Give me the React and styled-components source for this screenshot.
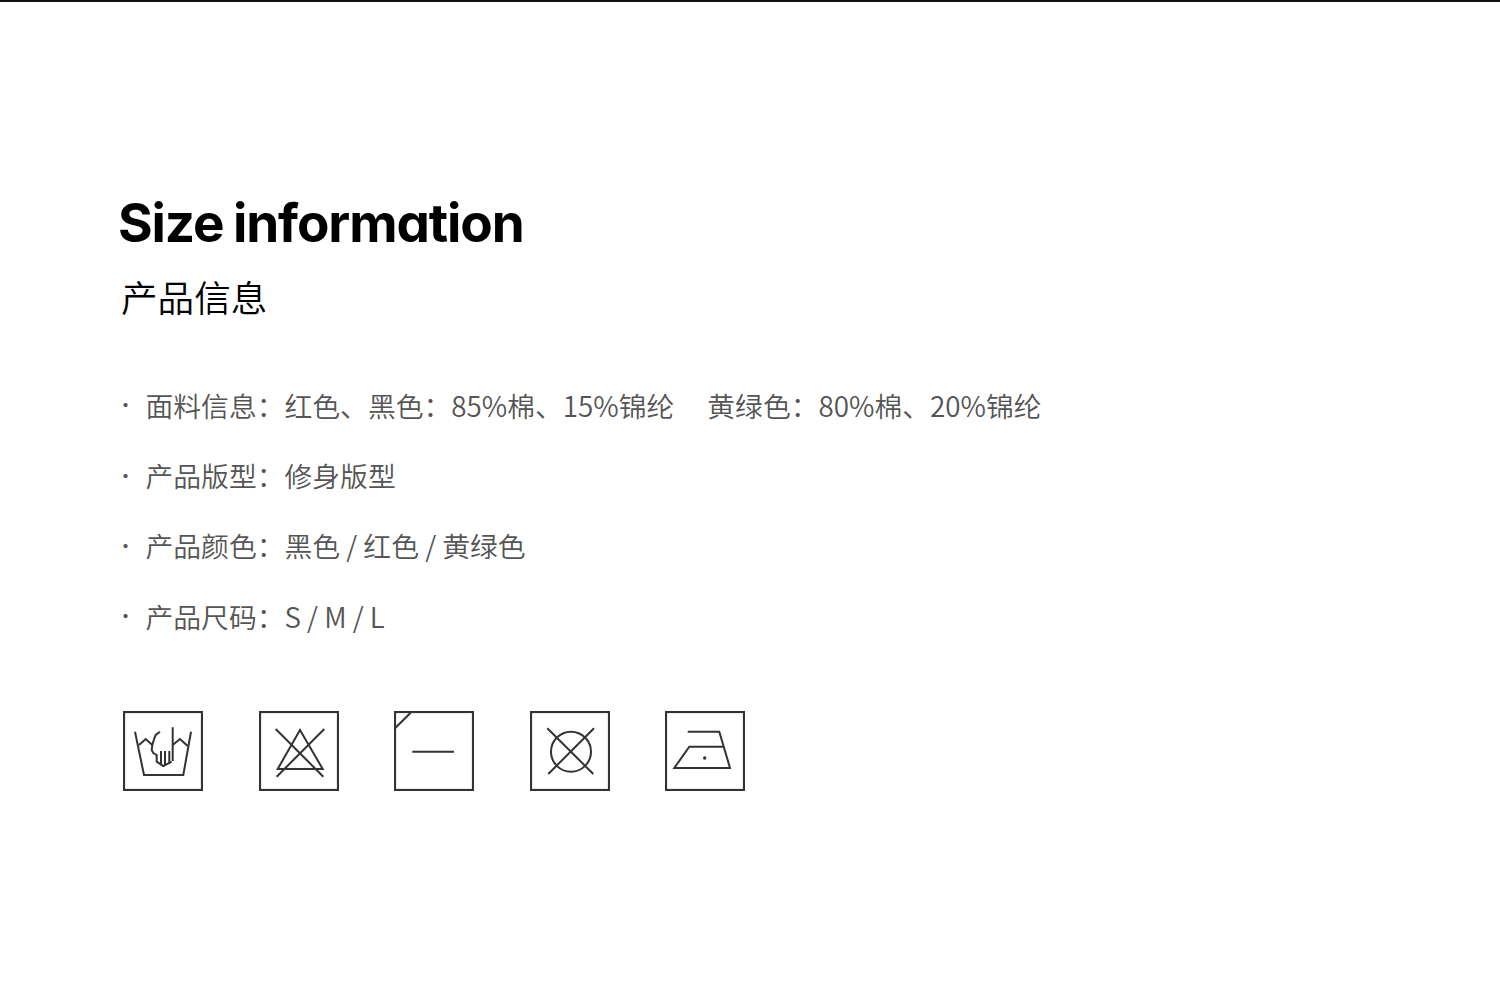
import React from 'react';
import styled, { createGlobalStyle } from 'styled-components';

const GlobalStyle = createGlobalStyle`
  html, body {
    margin: 0;
    padding: 0;
    background: #fff;
  }
`

const Page = styled.div`
  box-sizing: border-box;
  height: 990px;
  border-top: 2px solid #111;
  padding: 190px 120px 0 119px;
  font-family: "Noto Sans CJK SC", "Noto Sans", sans-serif;
  overflow: hidden;
`

const Title = styled.h1`
  margin: 0 0 0 -1px;
  font-family: Inter, "Liberation Sans", sans-serif;
  font-feature-settings: "cv11" 1;
  font-size: 53px;
  line-height: 62px;
  font-weight: 700;
  letter-spacing: -1.11px;
  word-spacing: -2px;
  color: #000;
`

const Subtitle = styled.h2`
  margin: 17px 0 0 2px;
  font-size: 36.6px;
  line-height: 52px;
  font-weight: 350;
  color: #000;
`

const SpecList = styled.ul`
  list-style: none;
  margin: 46.5px 0 0;
  padding: 0;
`

const SpecRow = styled.li`
  display: flex;
  height: 70.4px;
  align-items: center;
  font-size: 27.8px;
  font-weight: 350;
  color: #555;
  white-space: pre;
`

const Dot = styled.span`
  width: 30px;
  margin-left: -3.5px;
  font-size: 20px;
`

const Spacer = styled.span`
  display: inline-block;
  width: 33px;
`

const CareRow = styled.div`
  display: flex;
  gap: 55.5px;
  margin: 59.5px 0 0 4px;
`

const CareIcon = styled.svg.attrs({ viewBox: '0 0 80 80', fill: 'none' })`
  display: block;
  width: 80px;
  height: 80px;
  stroke: #333;
  stroke-width: 2;
`

const Frame = styled.rect.attrs({ x: 1, y: 1, width: 78, height: 78 })`
  stroke-width: 2.2;
`

const specs = [
  <>面料信息：红色、黑色：85%棉、15%锦纶<Spacer />黄绿色：80%棉、20%锦纶</>,
  '产品版型：修身版型',
  '产品颜色：黑色 / 红色 / 黄绿色',
  '产品尺码：S / M / L',
];

const App = () => (
  <Page>
    <GlobalStyle />
    <Title>Size information</Title>
    <Subtitle>产品信息</Subtitle>
    <SpecList>
      {specs.map((s, i) => (
        <SpecRow key={i}><Dot>·</Dot><span>{s}</span></SpecRow>
      ))}
    </SpecList>
    <CareRow>
      <CareIcon>
        <Frame />
        <path d="M12 20.7 21 64H60.3L68 20.7" />
        <path d="M16 34 22.7 28 29.3 34M49.7 34 57 28 64.7 35" />
        <path d="M37 20.7 32.7 24 31.3 27.3 29.3 34 28.7 39 30.3 42 33.7 44V50.7L40.3 55 48.7 50.7" />
        <path d="M38 40V53M42 40V54M46.3 40V52.5M49.7 16.3V50" />
      </CareIcon>
      <CareIcon>
        <Frame />
        <path d="M41 19 18.7 58H63.7Z" />
        <path d="M16.7 18 64.3 65.7M65.3 18 17.7 65.7" />
      </CareIcon>
      <CareIcon>
        <Frame />
        <path d="M16.7 1.7 1 17.3M18.3 40.7H60" />
      </CareIcon>
      <CareIcon>
        <Frame />
        <circle cx="41" cy="40.7" r="20" />
        <path d="M17.3 17.3 63.3 63M64 17.3 18.3 63" />
      </CareIcon>
      <CareIcon>
        <Frame />
        <path d="M22.7 20.7H54.3L65 57H9.3L24.3 35.7H58.3" />
        <circle cx="39.7" cy="47" r="1.7" fill="#333" stroke="none" />
      </CareIcon>
    </CareRow>
  </Page>
);

export default App;
